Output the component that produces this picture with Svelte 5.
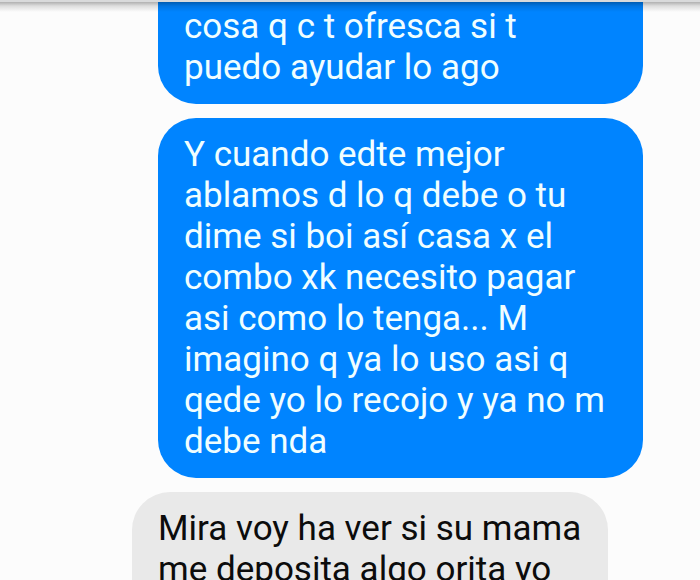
<script>
  const messages = [
    {
      from: 'me',
      lines: ['cosa q c t ofresca si t', 'puedo ayudar lo ago']
    },
    {
      from: 'me',
      lines: [
        'Y cuando edte mejor',
        'ablamos d lo q debe o tu',
        'dime si boi así casa x el',
        'combo xk necesito pagar',
        'asi como lo tenga... M',
        'imagino q ya lo uso asi q',
        'qede yo lo recojo y ya no m',
        'debe nda'
      ]
    },
    {
      from: 'them',
      lines: ['Mira voy ha ver si su mama', 'me deposita algo orita yo']
    }
  ];
</script>

<main class="chat">
  <div class="toolbar-edge"></div>
  {#each messages as message, i}
    <div class="bubble {message.from}" class:first={i === 0} class:last={i === messages.length - 1}>
      {#each message.lines as line}
        <span class="line">{line}</span>
      {/each}
    </div>
  {/each}
</main>

<style>
  :global(body) {
    margin: 0;
    background: #fcfcfc;
  }

  .chat {
    position: relative;
    display: flex;
    flex-direction: column;
    height: 100vh;
    overflow: hidden;
    font-family: Roboto, 'Liberation Sans', sans-serif;
    font-size: 35px;
    line-height: 41px;
  }

  .toolbar-edge {
    flex: none;
    height: 2px;
    background: #d9dadb;
  }

  /* shadow of the toolbar, falls over the messages */
  .toolbar-edge::after {
    content: '';
    position: absolute;
    top: 2px;
    left: 0;
    right: 0;
    height: 10px;
    background: linear-gradient(rgba(0, 0, 0, 0.3), rgba(0, 0, 0, 0.12) 40%, rgba(0, 0, 0, 0));
  }

  .bubble {
    flex: none;
    padding: 16px 26px;
    border-radius: 38px;
    margin-bottom: 14px;
  }

  .me {
    margin-left: 158px;
    margin-right: 57px;
    background: #0084ff;
    color: #f0feff;
  }

  .them {
    margin-left: 132px;
    margin-right: 92px;
    background: #e9e9e9;
    color: #0c0c0c;
  }

  .first {
    padding-top: 4px;
    border-top-left-radius: 0;
    border-top-right-radius: 0;
  }

  .last {
    margin-bottom: 0;
    border-bottom-left-radius: 0;
    border-bottom-right-radius: 0;
  }

  .line {
    display: block;
    white-space: nowrap;
  }
</style>
